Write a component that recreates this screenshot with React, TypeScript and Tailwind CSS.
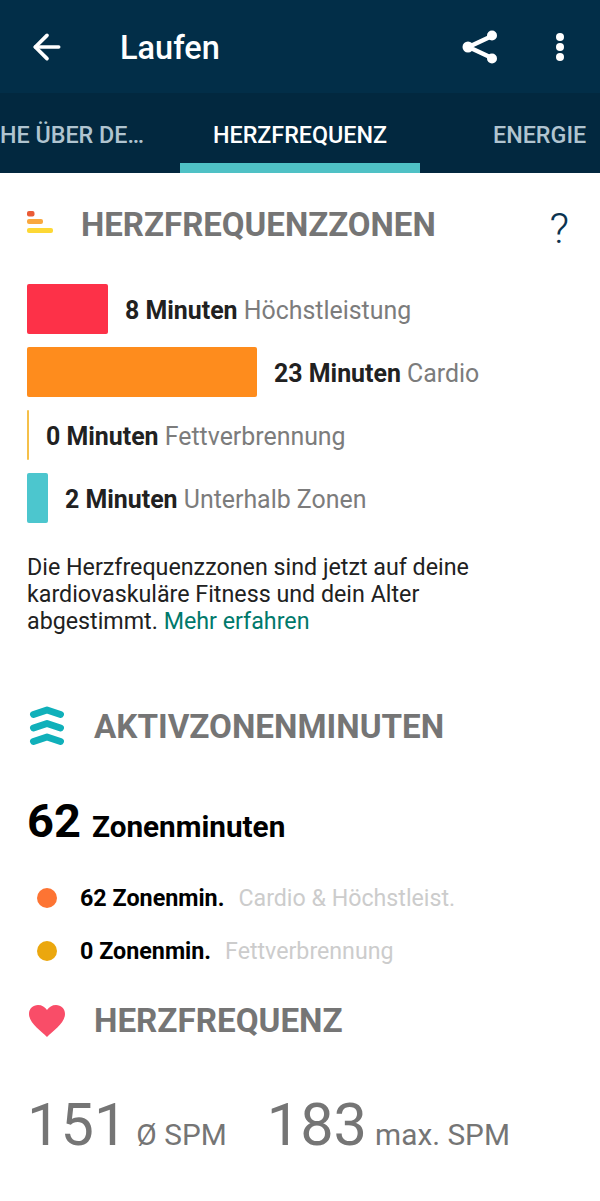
import { ArrowLeft } from "lucide-react";

const zones = [
  { width: "w-[81px]", color: "bg-[#fd3148]", mins: "8 Minuten", label: "Höchstleistung" },
  { width: "w-[230px]", color: "bg-[#fe8c1d]", mins: "23 Minuten", label: "Cardio" },
  { width: "w-[2px]", color: "bg-[#f5c04a]", mins: "0 Minuten", label: "Fettverbrennung" },
  { width: "w-[21px]", color: "bg-[#4cc6ce]", mins: "2 Minuten", label: "Unterhalb Zonen" },
];

function ShareIcon() {
  return (
    <svg width="36" height="36" viewBox="0 0 36 36" fill="none">
      <path d="M30 7 L6.5 18 L30 29" stroke="#fff" strokeWidth="4.4" fill="none" />
      <circle cx="30" cy="6.5" r="5" fill="#fff" />
      <circle cx="6" cy="18" r="5.5" fill="#fff" />
      <circle cx="30" cy="29.5" r="5" fill="#fff" />
    </svg>
  );
}

function ZonesIcon() {
  return (
    <svg width="27" height="22" viewBox="0 0 27 22" className="mb-[6px]">
      <rect x="0" y="0" width="7.5" height="5.5" rx="2" fill="#ea5b36" />
      <rect x="0" y="8" width="16" height="5" rx="2" fill="#f9a83f" />
      <rect x="0" y="17" width="26" height="5" rx="2" fill="#fdd835" />
    </svg>
  );
}

function ChevronsIcon() {
  return (
    <svg width="36" height="40" viewBox="0 0 36 40" className="mb-[3px]" fill="none" stroke="#10b0ba" strokeWidth="7" strokeLinecap="round" strokeLinejoin="round">
      <path d="M4.5 8.5 L18 4 L31.5 8.5" />
      <path d="M4.5 22 L18 17.5 L31.5 22" />
      <path d="M4.5 35.5 L18 31 L31.5 35.5" />
    </svg>
  );
}

function HeartIcon() {
  return (
    <svg width="36" height="32" viewBox="0 0 36 32">
      <path
        d="M18 32 C12 26 0 18 0 9 C0 3.5 4 0 9 0 C13 0 16 2 18 5 C20 2 23 0 27 0 C32 0 36 3.5 36 9 C36 18 24 26 18 32 Z"
        fill="#f94d68"
      />
    </svg>
  );
}

export default function App() {
  return (
    <div className="w-[600px] h-[1201px] overflow-hidden bg-white font-['Roboto',sans-serif]">
      {/* app bar */}
      <div className="h-[93px] bg-[#022e48] flex items-center text-white">
        <ArrowLeft className="ml-[27px] w-10 h-10" strokeWidth={2.2} />
        <div className="ml-[53px] pt-[3px] text-[32.5px] font-medium">Laufen</div>
        <div className="ml-auto mr-[22px] flex items-center gap-[58px]">
          <ShareIcon />
          <div className="flex flex-col gap-[2px] mr-[14px]">
            <div className="w-[8px] h-[8px] rounded-full bg-white" />
            <div className="w-[8px] h-[8px] rounded-full bg-white" />
            <div className="w-[8px] h-[8px] rounded-full bg-white" />
          </div>
        </div>
      </div>

      {/* tabs */}
      <div className="h-[80px] bg-[#02283f] flex text-[23.3px] font-medium">
        <div className="w-[180px] pt-[25px] text-[#b0c4d0] whitespace-nowrap overflow-hidden">HE ÜBER DE…</div>
        <div className="w-[240px] pt-[25px] text-white text-center border-b-[10px] border-[#4fc1c5]">HERZFREQUENZ</div>
        <div className="flex-1 pt-[25px] pl-[73px] text-[#b0c4d0] whitespace-nowrap">ENERGIE</div>
      </div>

      {/* heart rate zones */}
      <div className="flex items-center pl-[27px] pr-[31px] mt-[30px] h-[44px]">
        <ZonesIcon />
        <h2 className="ml-[27px] text-[33px] font-bold text-[#757575]">HERZFREQUENZZONEN</h2>
        <span className="ml-auto mt-[7px] text-[43px] leading-none font-light text-[#0b3350]">?</span>
      </div>

      <div className="mt-[37px] pl-[27px] flex flex-col gap-[13px]">
        {zones.map((z) => (
          <div key={z.mins} className="flex items-center h-[50px]">
            <div className={`${z.width} ${z.color} h-full rounded-[2px]`} />
            <div className="ml-[17px] pt-[4px] text-[24.9px] text-[#7c7c7c]">
              <span className="font-bold text-[#212121]">{z.mins}</span> {z.label}
            </div>
          </div>
        ))}
      </div>

      <p className="mt-[31px] pl-[27px] w-[500px] text-[23.25px] leading-[27px] text-[#212121]">
        Die Herzfrequenzzonen sind jetzt auf deine kardiovaskuläre Fitness und dein Alter abgestimmt.{" "}
        <span className="text-[#00796b]">Mehr erfahren</span>
      </p>

      {/* active zone minutes */}
      <div className="flex items-center pl-[29px] mt-[70px] h-[44px]">
        <ChevronsIcon />
        <h2 className="ml-[29px] text-[33.2px] font-bold text-[#757575]">AKTIVZONENMINUTEN</h2>
      </div>

      <div className="mt-[37px] pl-[27px] flex items-baseline h-[62px] text-black">
        <span className="text-[47px] font-bold">62</span>
        <span className="ml-[11px] text-[29.7px] font-bold">Zonenminuten</span>
      </div>

      <div className="mt-[35px] pl-[37px] flex items-center h-[30px]">
        <div className="w-[20px] h-[20px] rounded-full bg-[#fd7433]" />
        <span className="ml-[23px] text-[23.3px] font-bold text-black">62 Zonenmin.</span>
        <span className="ml-[14px] text-[23.2px] text-[#cccccc]">Cardio &amp; Höchstleist.</span>
      </div>
      <div className="mt-[23px] pl-[37px] flex items-center h-[30px]">
        <div className="w-[20px] h-[20px] rounded-full bg-[#eba70e]" />
        <span className="ml-[23px] text-[23.3px] font-bold text-black">0 Zonenmin.</span>
        <span className="ml-[14px] text-[23.2px] text-[#cccccc]">Fettverbrennung</span>
      </div>

      {/* heart rate */}
      <div className="flex items-center pl-[29px] mt-[33px] h-[44px]">
        <HeartIcon />
        <h2 className="ml-[29px] text-[33.2px] font-bold text-[#757575]">HERZFREQUENZ</h2>
      </div>

      <div className="mt-[38px] pl-[27px] flex items-baseline text-[#757575]">
        <span className="text-[59.5px]">151</span>
        <span className="ml-[9px] text-[29.8px]">Ø SPM</span>
        <span className="ml-[40px] text-[59.5px]">183</span>
        <span className="ml-[8px] text-[29.8px]">max. SPM</span>
      </div>
    </div>
  );
}
